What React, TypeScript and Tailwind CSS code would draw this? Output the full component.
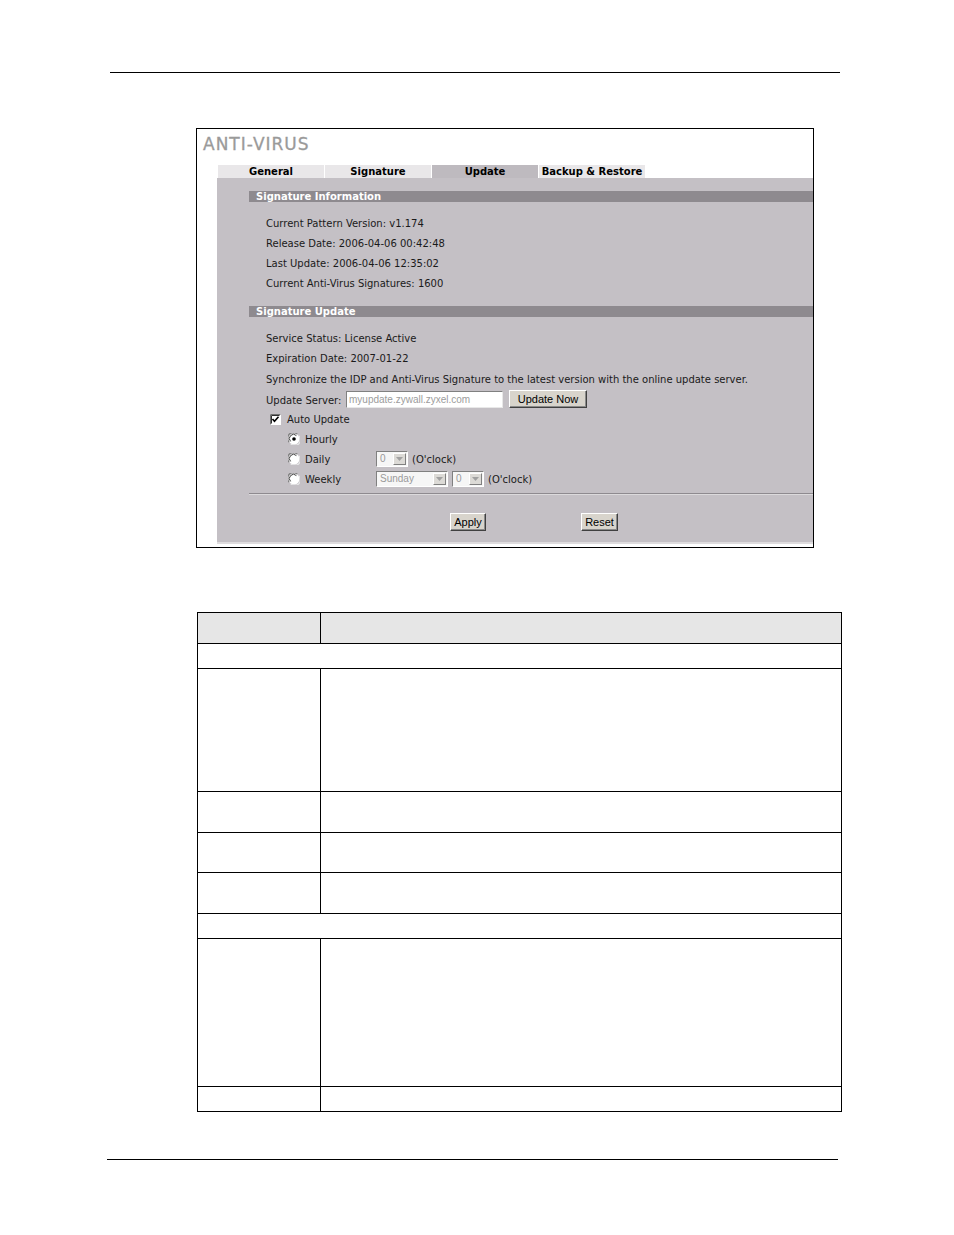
const INFO_LINES = [
  "Current Pattern Version: v1.174",
  "Release Date: 2006-04-06 00:42:48",
  "Last Update: 2006-04-06 12:35:02",
  "Current Anti-Virus Signatures: 1600",
];

const TABS = [
  { name: "General", active: false },
  { name: "Signature", active: false },
  { name: "Update", active: true },
  { name: "Backup & Restore", active: false },
];

// row heights of the (empty) description table, border-bottom included
const TABLE_ROWS: { h: string; full?: boolean; head?: boolean }[] = [
  { h: "h-[31px]", head: true },
  { h: "h-[25px]", full: true },
  { h: "h-[123px]" },
  { h: "h-[41px]" },
  { h: "h-[40px]" },
  { h: "h-[41px]" },
  { h: "h-[25px]", full: true },
  { h: "h-[148px]" },
  { h: "h-[25px]" },
];

function SectionBar({ title }: { title: string }) {
  return (
    <div className="ml-[32px] h-[11px] bg-[#8e8a8f] pl-[7px] text-[10px] font-bold leading-[11px] text-white">
      {title}
    </div>
  );
}

function Radio({ checked }: { checked?: boolean }) {
  return (
    <svg width="12" height="12" viewBox="0 0 12 12" className="shrink-0">
      <circle cx="6" cy="6" r="5.5" fill="#ffffff" />
      <path d="M1.2 9.2 A5 5 0 0 1 9.2 1.2" fill="none" stroke="#808080" strokeWidth="1.2" />
      <path d="M2.6 8.4 A3.6 3.6 0 0 1 8.4 2.6" fill="none" stroke="#404040" strokeWidth="1" />
      <path d="M10.8 2.8 A5 5 0 0 1 2.8 10.8" fill="none" stroke="#e8e8e8" strokeWidth="1.2" />
      {checked && <circle cx="6" cy="6" r="1.8" fill="#000000" />}
    </svg>
  );
}

function Checkbox() {
  return (
    <svg width="11" height="11" viewBox="0 0 11 11" className="shrink-0">
      <rect x="0" y="0" width="11" height="11" fill="#ffffff" />
      <path d="M0.5 10.5 V0.5 H10.5" fill="none" stroke="#707070" />
      <path d="M1.5 9.5 V1.5 H9.5" fill="none" stroke="#303030" />
      <path d="M2.5 5 L4.5 7.2 L8.5 2.8" fill="none" stroke="#000000" strokeWidth="1.6" />
    </svg>
  );
}

function Select({ value, w }: { value: string; w: string }) {
  return (
    <div
      className={`${w} flex h-[16px] items-center border border-t-[#808080] border-l-[#808080] border-b-white border-r-white bg-[#f6f6f6] font-['Liberation_Sans',sans-serif] text-[10px] text-[#9a9a9a]`}
    >
      <span className="flex-1 pl-[3px] leading-[14px]">{value}</span>
      <div className="mr-px flex h-[12px] w-[13px] items-center justify-center border border-t-white border-l-white border-b-[#808080] border-r-[#808080] bg-[#dcdad6]">
        <svg width="7" height="4" viewBox="0 0 7 4">
          <path d="M0 0 H7 L3.5 4 Z" fill="#a0a0a0" />
        </svg>
      </div>
    </div>
  );
}

function WinButton({ label, w }: { label: string; w: string }) {
  return (
    <div
      className={`${w} flex h-[18px] items-center justify-center border border-t-white border-l-white border-b-[#404040] border-r-[#404040] bg-[#d8d4cc] font-['Liberation_Sans',sans-serif] text-[11px] text-black shadow-[inset_-1px_-1px_0_#8a8a8a]`}
    >
      {label}
    </div>
  );
}

function AntiVirusScreen() {
  return (
    <div className="ml-[196px] mt-[55px] flex h-[420px] w-[618px] flex-col border border-black bg-white">
      <div className="mt-[5px] h-[20px] pl-[6px] text-[17px] leading-[20px] tracking-[1px] text-[#9a9a9a] [-webkit-text-stroke:0.3px_#9a9a9a]">
        ANTI-VIRUS
      </div>

      <div className="ml-[21px] mt-[11px] flex h-[13px] gap-px">
        {TABS.map((t) => (
          <div
            key={t.name}
            className={`flex w-[106px] items-center justify-center whitespace-nowrap text-[10px] font-bold leading-[13px] text-black ${
              t.active ? "bg-[#bebabf]" : "bg-[#e9e7e9]"
            }`}
          >
            {t.name}
          </div>
        ))}
      </div>

      <div className="ml-[20px] flex h-[364px] flex-col bg-[#c4c0c5] pt-[13px] text-[10px] text-[#1a1a1a]">
        <SectionBar title="Signature Information" />
        <div className="mt-[12px] pl-[49px]">
          {INFO_LINES.map((l) => (
            <div key={l} className="h-[20px] leading-[20px]">
              {l}
            </div>
          ))}
        </div>

        <div className="mt-[12px]">
          <SectionBar title="Signature Update" />
        </div>
        <div className="mt-[12px]">
          <div className="h-[20px] pl-[49px] leading-[20px]">Service Status: License Active</div>
          <div className="h-[20px] pl-[49px] leading-[20px]">Expiration Date: 2007-01-22</div>
          <div className="h-[20px] pl-[49px] leading-[21px]">
            Synchronize the IDP and Anti-Virus Signature to the latest version with the online update server.
          </div>
          <div className="flex h-[20px] items-center pl-[49px]">
            <span className="w-[80px] pt-[2px]">Update Server:</span>
            <div className="flex h-[17px] w-[157px] items-center border border-t-[#808080] border-l-[#808080] border-b-[#e8e8e8] border-r-[#e8e8e8] bg-white pl-[2px] font-['Liberation_Sans',sans-serif] text-[10px] text-[#9c9c9c]">
              myupdate.zywall.zyxel.com
            </div>
            <div className="ml-[6px]">
              <WinButton label="Update Now" w="w-[78px]" />
            </div>
          </div>
          <div className="flex h-[20px] items-center pl-[53px]">
            <Checkbox />
            <span className="ml-[6px]">Auto Update</span>
          </div>
          <div className="flex h-[20px] items-center pl-[71px]">
            <Radio checked />
            <span className="ml-[5px]">Hourly</span>
          </div>
          <div className="flex h-[20px] items-center pl-[71px]">
            <Radio />
            <span className="ml-[5px] w-[71px]">Daily</span>
            <Select value="0" w="w-[32px]" />
            <span className="ml-[4px]">(O'clock)</span>
          </div>
          <div className="flex h-[20px] items-center pl-[71px]">
            <Radio />
            <span className="ml-[5px] w-[71px]">Weekly</span>
            <Select value="Sunday" w="w-[72px]" />
            <div className="ml-[4px]">
              <Select value="0" w="w-[32px]" />
            </div>
            <span className="ml-[4px]">(O'clock)</span>
          </div>
        </div>

        <div className="ml-[32px] mt-[4px] h-px bg-[#8e8a8f]" />
        <div className="ml-[32px] h-px bg-[#dcdadc]" />

        <div className="mt-[18px] flex pl-[233px]">
          <WinButton label="Apply" w="w-[36px]" />
          <div className="ml-[95px]">
            <WinButton label="Reset" w="w-[37px]" />
          </div>
        </div>
      </div>
      <div className="ml-[20px] h-[2px] bg-[#dedcde]" />
    </div>
  );
}

function DescriptionTable() {
  return (
    <div className="ml-[197px] mt-[64px] w-[645px] border-l border-r border-t border-black">
      {TABLE_ROWS.map((r, i) => (
        <div key={i} className={`${r.h} flex border-b border-black ${r.head ? "bg-[#e6e6e6]" : ""}`}>
          {!r.full && <div className="w-[123px] border-r border-black" />}
          <div className="flex-1" />
        </div>
      ))}
    </div>
  );
}

export default function App() {
  return (
    <div className="h-[1235px] w-[954px] bg-white pt-[72px] font-['DejaVu_Sans',sans-serif]">
      <div className="ml-[110px] h-px w-[730px] bg-black" />
      <AntiVirusScreen />
      <DescriptionTable />
      <div className="ml-[107px] mt-[47px] h-px w-[731px] bg-black" />
    </div>
  );
}
